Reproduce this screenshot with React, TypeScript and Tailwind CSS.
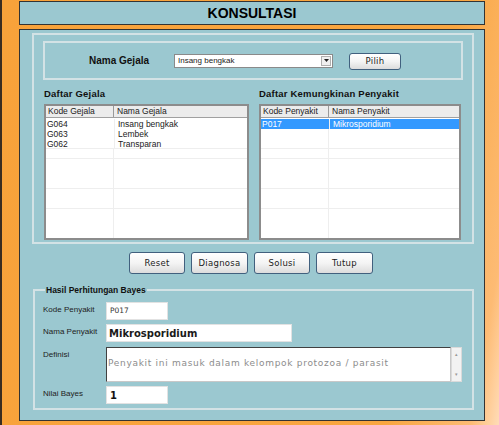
import React from "react";

const sans = { fontFamily: '"Liberation Sans", Arial, sans-serif' };
const dv = { fontFamily: '"DejaVu Sans", Verdana, sans-serif' };

function ListView({
  cols,
  rows,
  selected,
}: {
  cols: [string, string];
  rows: [string, string][];
  selected?: number;
}) {
  // faint grid lines the original list shows below the rows
  const filler = [10, 30, 20];
  return (
    <div className="w-full h-[136px] shrink-0 bg-white border-2 border-[#8c8c8c] flex flex-col overflow-hidden">
      <div className="flex shrink-0 h-[12px] bg-[#ececec] border-b border-[#a0a0a0] text-[8.5px] leading-[11px] text-[#222]">
        <div className="w-[68px] pl-[2px] border-r border-[#9a9a9a]">{cols[0]}</div>
        <div className="pl-[3px] flex-1">{cols[1]}</div>
      </div>
      <div className="h-[31px] shrink-0 pt-[1px] border-b border-[#eeeeee] flex flex-col">
        {rows.map((r, i) => (
          <div
            key={i}
            className={
              "flex h-[10px] shrink-0 text-[8.5px] leading-[10px] " +
              (i === selected ? "bg-[#3399ff] text-white" : "text-[#222]")
            }
          >
            <div className="w-[68px] pl-[1px]">{r[0]}</div>
            <div className="pl-[3px] flex-1 border-l border-[#eeeeee]">{r[1]}</div>
          </div>
        ))}
        <div className="flex flex-1">
          <div className="w-[68px] border-r border-[#eeeeee]" />
        </div>
      </div>
      {filler.map((h, i) => (
        <div key={i} className="flex shrink-0 border-b border-[#eeeeee]" style={{ height: h }}>
          <div className="w-[68px] border-r border-[#eeeeee]" />
        </div>
      ))}
      <div className="flex flex-1">
        <div className="w-[68px] border-r border-[#eeeeee]" />
      </div>
    </div>
  );
}

function Btn({ children, className = "" }: { children: React.ReactNode; className?: string }) {
  return (
    <div
      className={
        "flex items-center justify-center shrink-0 rounded-[3px] border border-[#41607e] bg-[linear-gradient(#ffffff,#f4f4f4_50%,#dcdcdc)] text-[8.5px] text-[#222] tracking-[0.3px] " +
        className
      }
      style={dv}
    >
      {children}
    </div>
  );
}

export default function App() {
  return (
    <div
      className="w-[499px] h-[425px] overflow-hidden border-l-2 border-[#3a2c20] bg-[linear-gradient(100deg,#f8a23a_0%,#f9a640_80%,#fdbb74_95%,#ffcf9c_98%,#ffdcb8_100%)] pl-[17px] pt-[1px]"
      style={sans}
    >
      {/* title bar */}
      <div className="w-[466px] h-[24px] bg-[#9bc8d0] border border-[#333] flex items-center justify-center">
        <span className="text-[14px] font-bold text-black leading-none">KONSULTASI</span>
      </div>

      {/* main panel */}
      <div className="w-[466px] h-[392px] mt-[4px] bg-[#9bc8d0] border border-[#333] flex flex-col">
        {/* upper group */}
        <div className="w-[442px] h-[211px] shrink-0 ml-[12px] mt-[3px] border-2 border-[#d3e2e5] px-[9px] pt-[6px] pb-[2px] flex flex-col">
          <div className="h-[39px] shrink-0 border-2 border-[#d3e2e5] flex items-center pl-[44px]">
            <span className="text-[10px] font-bold text-[#111] w-[85px]">Nama Gejala</span>
            <div className="w-[159px] h-[14px] bg-white border border-[#8a8a8a] flex items-center justify-between pl-[3px] pr-[1px]">
              <span className="text-[8px] text-[#222]">Insang bengkak</span>
              <div className="w-[10px] h-[10px] bg-[#f0f0f0] border border-[#b0b0b0] flex items-center justify-center">
                <svg width="5" height="3" viewBox="0 0 5 3">
                  <path d="M0 0h5L2.5 3z" fill="#222" />
                </svg>
              </div>
            </div>
            <Btn className="w-[52px] h-[17px] ml-[16px] mt-[2px]">Pilih</Btn>
          </div>

          <div className="flex gap-[10px] mt-[8px] pl-[1px] pr-[1px]">
            <div className="w-[205px] flex flex-col">
              <div className="text-[9.5px] font-bold text-[#111] h-[16px] leading-[12px] tracking-[0.2px]">
                Daftar Gejala
              </div>
              <ListView
                cols={["Kode Gejala", "Nama Gejala"]}
                rows={[
                  ["G064", "Insang bengkak"],
                  ["G063", "Lembek"],
                  ["G062", "Transparan"],
                ]}
              />
            </div>
            <div className="w-[202px] flex flex-col">
              <div className="text-[9.5px] font-bold text-[#111] h-[16px] leading-[12px] tracking-[0.2px]">
                Daftar Kemungkinan Penyakit
              </div>
              <ListView cols={["Kode Penyakit", "Nama Penyakit"]} rows={[["P017", "Mikrosporidium"]]} selected={0} />
            </div>
          </div>
        </div>

        {/* buttons */}
        <div className="flex justify-center gap-[6px] mt-[8px] pr-[2px]">
          <Btn className="w-[56px] h-[22px]">Reset</Btn>
          <Btn className="w-[57px] h-[22px]">Diagnosa</Btn>
          <Btn className="w-[56px] h-[22px]">Solusi</Btn>
          <Btn className="w-[57px] h-[22px]">Tutup</Btn>
        </div>

        {/* result group */}
        <fieldset className="w-[441px] ml-[13px] mt-[10px] border-2 border-[#d3e2e5] pl-[8px] pt-[6px] pb-[4px] flex flex-col gap-[4px]">
          <legend className="ml-[2px] px-[1px] text-[8.5px] font-bold text-[#111] leading-[12px]">
            Hasil Perhitungan Bayes
          </legend>
          <div className="flex items-start">
            <span className="w-[63px] pt-[3px] text-[8px] text-[#222] leading-[10px]">Kode Penyakit</span>
            <div className="w-[62px] h-[18px] bg-white border border-[#e2e2e2] flex items-center pl-[3px]">
              <span className="text-[7.5px] text-[#333]" style={dv}>P017</span>
            </div>
          </div>
          <div className="flex items-start">
            <span className="w-[63px] pt-[3px] text-[8px] text-[#222] leading-[10px]">Nama Penyakit</span>
            <div className="w-[186px] h-[18px] bg-white border border-[#e2e2e2] flex items-center pl-[2px]">
              <span className="text-[10px] font-bold text-[#1a1a1a]" style={dv}>
                Mikrosporidium
              </span>
            </div>
          </div>
          <div className="flex items-start mt-[1px]">
            <span className="w-[63px] pt-[3px] text-[8px] text-[#222] leading-[10px]">Definisi</span>
            <div className="w-[345px] h-[35px] bg-white border border-[#404040] border-r-[#c8c8c8] border-b-[#c8c8c8] pl-[1px] pt-[1px]">
              <span className="text-[9px] text-[#8c8c8c] tracking-[0.7px] leading-[11px]" style={dv}>
                Penyakit ini masuk dalam kelompok protozoa / parasit
              </span>
            </div>
            <div className="w-[11px] h-[35px] bg-[#f2f2f2] border border-[#dadada] flex flex-col justify-between items-center py-[4px]">
              <span className="text-[5px] leading-none text-[#999]">▴</span>
              <span className="text-[5px] leading-none text-[#999]">▾</span>
            </div>
          </div>
          <div className="flex items-start">
            <span className="w-[63px] pt-[3px] text-[8px] text-[#222] leading-[10px]">Nilai Bayes</span>
            <div className="w-[62px] h-[18px] bg-white border border-[#e2e2e2] flex items-center pl-[3px]">
              <span className="text-[10px] font-bold text-[#111]" style={dv}>1</span>
            </div>
          </div>
        </fieldset>
      </div>
    </div>
  );
}
